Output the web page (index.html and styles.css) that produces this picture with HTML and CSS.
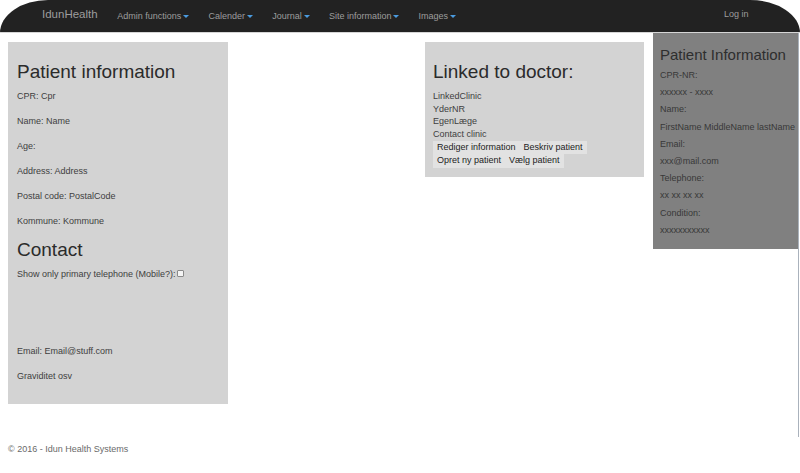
FILE: index.html
```html
<!DOCTYPE html>
<html lang="en">
<head>
<meta charset="utf-8">
<title>IdunHealth</title>
<link rel="stylesheet" href="styles.css">
</head>
<body>
<nav class="navbar">
  <a class="brand" href="#">IdunHealth</a>
  <ul class="nav-links">
    <li><a href="#">Admin functions<span class="caret"></span></a></li>
    <li><a href="#">Calender<span class="caret"></span></a></li>
    <li><a href="#">Journal<span class="caret"></span></a></li>
    <li><a href="#">Site information<span class="caret"></span></a></li>
    <li><a href="#">Images<span class="caret"></span></a></li>
  </ul>
  <a class="login" href="#">Log in</a>
</nav>

<aside class="side-info">
  <h3 class="side-title">Patient Information</h3>
  <p>CPR-NR:</p>
  <p>xxxxxx - xxxx</p>
  <p>Name:</p>
  <p>FirstName MiddleName lastName</p>
  <p>Email:</p>
  <p>xxx@mail.com</p>
  <p>Telephone:</p>
  <p>xx xx xx xx</p>
  <p>Condition:</p>
  <p>xxxxxxxxxxx</p>
</aside>
<div class="edge-line"></div>

<main class="content">
  <section class="panel patient">
    <h2>Patient information</h2>
    <p>CPR: Cpr</p>
    <p>Name: Name</p>
    <p>Age: </p>
    <p>Address: Address</p>
    <p>Postal code: PostalCode</p>
    <p>Kommune: Kommune</p>
    <h2>Contact</h2>
    <p>Show only primary telephone (Mobile?):<input type="checkbox" class="check"></p>
    <div class="phones"></div>
    <p>Email: Email@stuff.com</p>
    <p>Graviditet osv</p>
  </section>

  <section class="panel doctor">
    <h2>Linked to doctor:</h2>
    <div class="doc-lines">
      <div>LinkedClinic</div>
      <div>YderNR</div>
      <div>EgenLæge</div>
      <div>Contact clinic</div>
    </div>
    <div class="btns">
      <button class="btn">Rediger information</button>
      <button class="btn">Beskriv patient</button>
      <button class="btn">Opret ny patient</button>
      <button class="btn">Vælg patient</button>
    </div>
  </section>
</main>

<footer class="footer">© 2016 - Idun Health Systems</footer>
</body>
</html>
```

FILE: styles.css
```css
html, body {
  margin: 0;
  padding: 0;
}
body {
  font-family: "Liberation Sans", Arial, sans-serif;
  font-size: 9px;
  color: #404040;
  background: #fff;
  position: relative;
  min-height: 473px;
  overflow: hidden;
}

/* Navbar */
.navbar {
  display: flex;
  align-items: flex-start;
  height: 32px;
  background: #222;
  border-bottom: 1px solid #d6d6d6;
  border-radius: 48px 50px 0 0 / 33px 33px 0 0;
  padding: 0 42px 0 32px;
}
.navbar a {
  text-decoration: none;
  color: #9d9d9d;
}
.brand {
  font-size: 11.5px;
  line-height: 29px;
  padding: 0 10px;
}
.nav-links {
  list-style: none;
  margin: 0;
  padding: 0;
  display: flex;
}
.nav-links a {
  display: block;
  line-height: 32px;
  padding: 0 9.6px;
}
.caret {
  display: inline-block;
  width: 0;
  height: 0;
  margin-left: 2px;
  vertical-align: middle;
  border-top: 3px solid #4a9be0;
  border-left: 3px solid transparent;
  border-right: 3px solid transparent;
}
.login {
  margin-left: auto;
  line-height: 29px;
  padding: 0 9.6px;
}

/* Floating side panel */
.side-info {
  position: absolute;
  top: 33px;
  left: 653px;
  width: 145px;
  height: 216px;
  box-sizing: border-box;
  background: #808080;
  padding: 13px 0 0 7px;
  color: #383838;
}
.side-title {
  margin: 0 0 6px;
  font-size: 15px;
  line-height: 17px;
  font-weight: normal;
  color: #2e2e2e;
}
.side-info p {
  margin: 0 0 4.2px;
  line-height: 13px;
  white-space: nowrap;
}
.edge-line {
  position: absolute;
  top: 33px;
  left: 798px;
  width: 1px;
  height: 404px;
  background: #aab2bc;
}

/* Main content */
.content {
  display: grid;
  grid-template-columns: 220px 219px;
  column-gap: 197px;
  align-items: start;
  padding: 9px 0 0 8px;
}
.panel {
  background: #d3d3d3;
  padding: 8px 8px 9px;
}
.patient {
  padding-left: 9px;
}
.panel h2 {
  font-size: 19px;
  line-height: 19px;
  font-weight: normal;
  margin: 12px 0 9px;
  color: #2b2b2b;
}
.panel p {
  margin: 0 0 12px;
  line-height: 13px;
}
.patient h2:not(:first-child) {
  margin-top: 0;
}
.check {
  width: 7px;
  height: 7px;
  margin: 0 0 0 1px;
  padding: 0;
  vertical-align: 0;
  appearance: none;
  -webkit-appearance: none;
  border: 1px solid #8a8a8a;
  border-radius: 1px;
  background: #f4f4f4;
  box-sizing: border-box;
}
.phones {
  height: 52px;
}

.doc-lines div {
  line-height: 12.5px;
}
.btns {
  display: flex;
  flex-wrap: wrap;
  margin-top: 1px;
  width: 200px;
}
.btn {
  font-family: inherit;
  font-size: 9px;
  line-height: 13.4px;
  padding: 0 4px;
  margin: 0;
  border: 0;
  background: #e2e2e2;
  color: #222;
}

/* Footer */
.footer {
  margin: 39px 0 0 8px;
  line-height: 13px;
  color: #6a6a6a;
}
```
